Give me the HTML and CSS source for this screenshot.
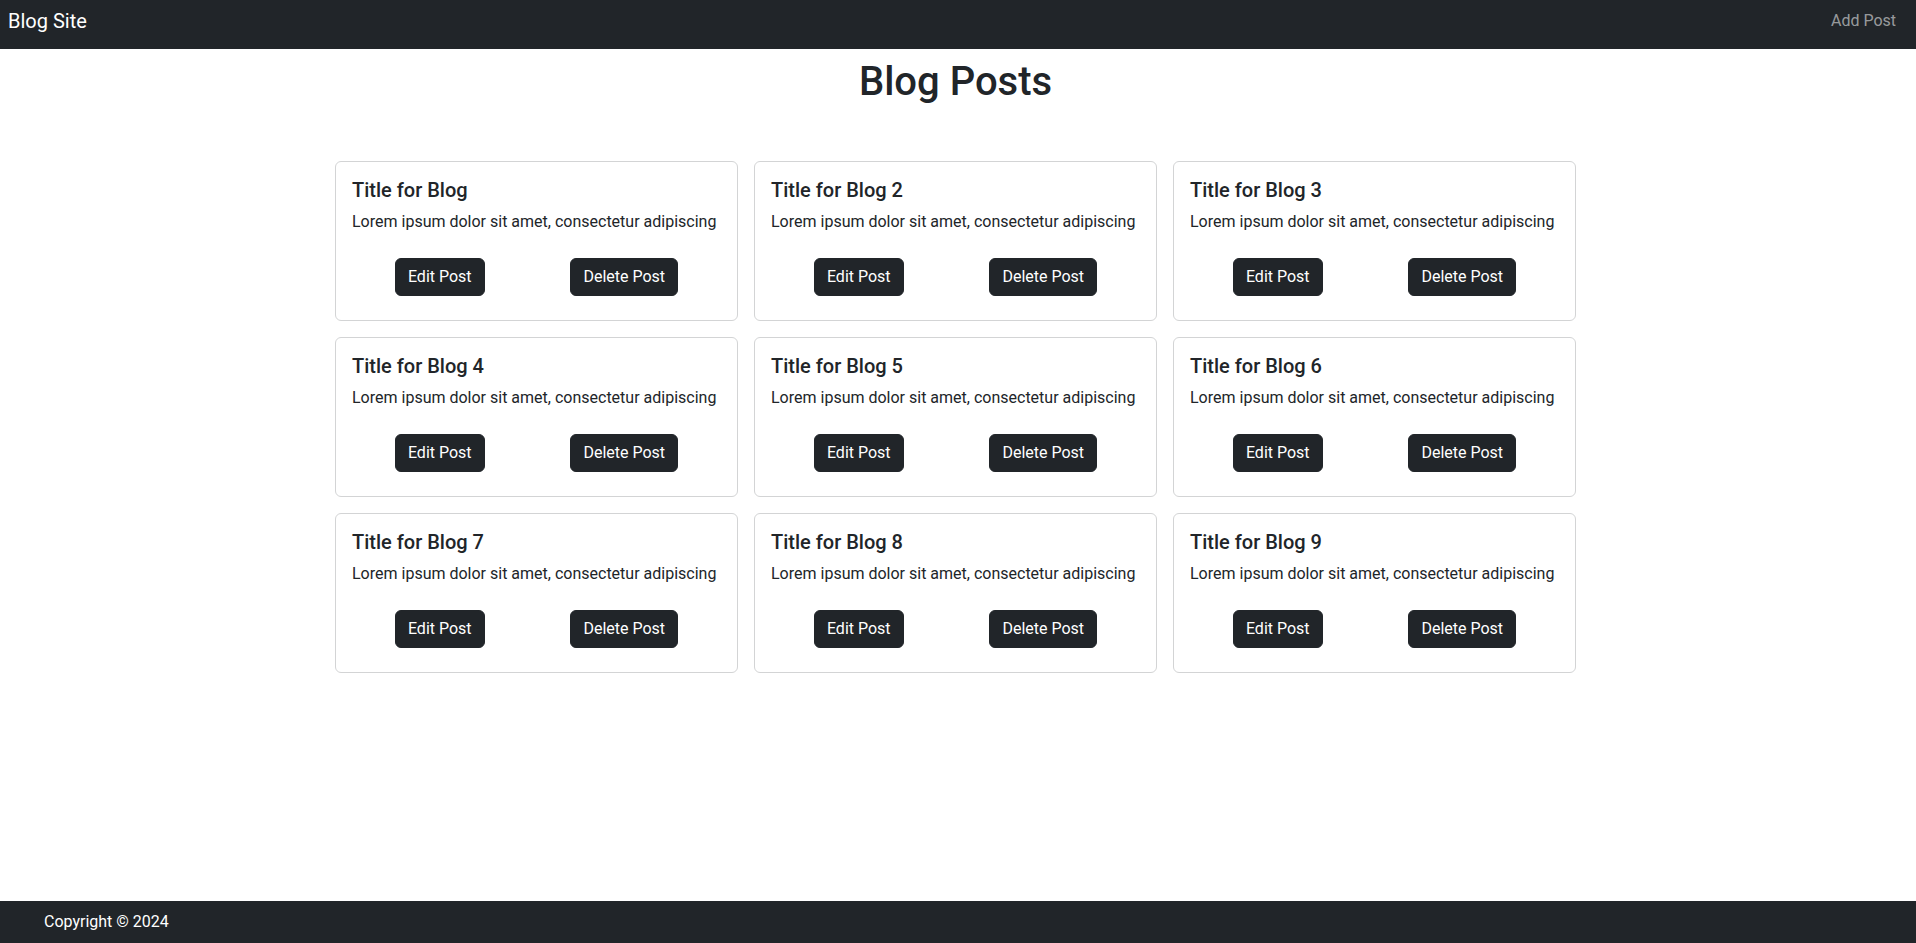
FILE: index.html
```html
<!DOCTYPE html>
<html lang="en">
<head>
<meta charset="utf-8">
<title>Blog Site</title>
<link rel="stylesheet" href="styles.css">
</head>
<body>
<nav class="navbar">
  <a class="brand" href="#">Blog Site</a>
  <a class="nav-link" href="#">Add Post</a>
</nav>
<main class="main">
  <h1 class="page-title">Blog Posts</h1>
  <div class="grid">
    <div class="card"><h5 class="card-title">Title for Blog</h5><p class="card-text">Lorem ipsum dolor sit amet, consectetur adipiscing</p><div class="actions"><button class="btn">Edit Post</button><button class="btn">Delete Post</button></div></div>
    <div class="card"><h5 class="card-title">Title for Blog 2</h5><p class="card-text">Lorem ipsum dolor sit amet, consectetur adipiscing</p><div class="actions"><button class="btn">Edit Post</button><button class="btn">Delete Post</button></div></div>
    <div class="card"><h5 class="card-title">Title for Blog 3</h5><p class="card-text">Lorem ipsum dolor sit amet, consectetur adipiscing</p><div class="actions"><button class="btn">Edit Post</button><button class="btn">Delete Post</button></div></div>
    <div class="card"><h5 class="card-title">Title for Blog 4</h5><p class="card-text">Lorem ipsum dolor sit amet, consectetur adipiscing</p><div class="actions"><button class="btn">Edit Post</button><button class="btn">Delete Post</button></div></div>
    <div class="card"><h5 class="card-title">Title for Blog 5</h5><p class="card-text">Lorem ipsum dolor sit amet, consectetur adipiscing</p><div class="actions"><button class="btn">Edit Post</button><button class="btn">Delete Post</button></div></div>
    <div class="card"><h5 class="card-title">Title for Blog 6</h5><p class="card-text">Lorem ipsum dolor sit amet, consectetur adipiscing</p><div class="actions"><button class="btn">Edit Post</button><button class="btn">Delete Post</button></div></div>
    <div class="card"><h5 class="card-title">Title for Blog 7</h5><p class="card-text">Lorem ipsum dolor sit amet, consectetur adipiscing</p><div class="actions"><button class="btn">Edit Post</button><button class="btn">Delete Post</button></div></div>
    <div class="card"><h5 class="card-title">Title for Blog 8</h5><p class="card-text">Lorem ipsum dolor sit amet, consectetur adipiscing</p><div class="actions"><button class="btn">Edit Post</button><button class="btn">Delete Post</button></div></div>
    <div class="card"><h5 class="card-title">Title for Blog 9</h5><p class="card-text">Lorem ipsum dolor sit amet, consectetur adipiscing</p><div class="actions"><button class="btn">Edit Post</button><button class="btn">Delete Post</button></div></div>
  </div>
</main>
<footer class="footer">Copyright © 2024</footer>
</body>
</html>
```
FILE: styles.css
```css
* { box-sizing: border-box; }
html, body { margin: 0; padding: 0; }
body {
  font-family: Roboto, "Liberation Sans", sans-serif;
  font-size: 16px;
  line-height: 1.5;
  color: #212529;
  background: #fff;
  min-height: 100vh;
  display: flex;
  flex-direction: column;
}
.navbar {
  height: 49px;
  background: #212529;
  display: flex;
  align-items: center;
  justify-content: space-between;
  padding: 0 20px 7px 8px;
}
.brand {
  color: #fff;
  font-size: 20px;
  line-height: 30px;
  text-decoration: none;
}
.nav-link {
  color: rgba(255, 255, 255, 0.55);
  font-size: 16px;
  text-decoration: none;
}
.main {
  flex: 1;
  display: flex;
  flex-direction: column;
  align-items: center;
  padding: 0 5px 0 0;
}
.page-title {
  margin: 9px 0 55px;
  font-size: 40px;
  line-height: 48px;
  font-weight: 500;
}
.grid {
  display: grid;
  grid-template-columns: repeat(3, 403px);
  gap: 16px;
}
.card {
  border: 1px solid #d3d4d5;
  border-radius: 6px;
  padding: 16px;
  height: 160px;
}
.card-title {
  margin: 0 0 8px;
  font-size: 20px;
  line-height: 24px;
  font-weight: 500;
}
.card-text {
  margin: 0 0 16px;
  white-space: nowrap;
}
.actions {
  display: flex;
  justify-content: space-around;
}
.btn {
  margin: 8px;
  font-family: inherit;
  font-size: 16px;
  line-height: 24px;
  padding: 6px 12px;
  color: #fff;
  background: #212529;
  border: 1px solid #212529;
  border-radius: 6px;
  cursor: pointer;
}
.footer {
  height: 42px;
  background: #212529;
  color: #fff;
  display: flex;
  align-items: center;
  padding-left: 44px;
  font-size: 16px;
}
```
